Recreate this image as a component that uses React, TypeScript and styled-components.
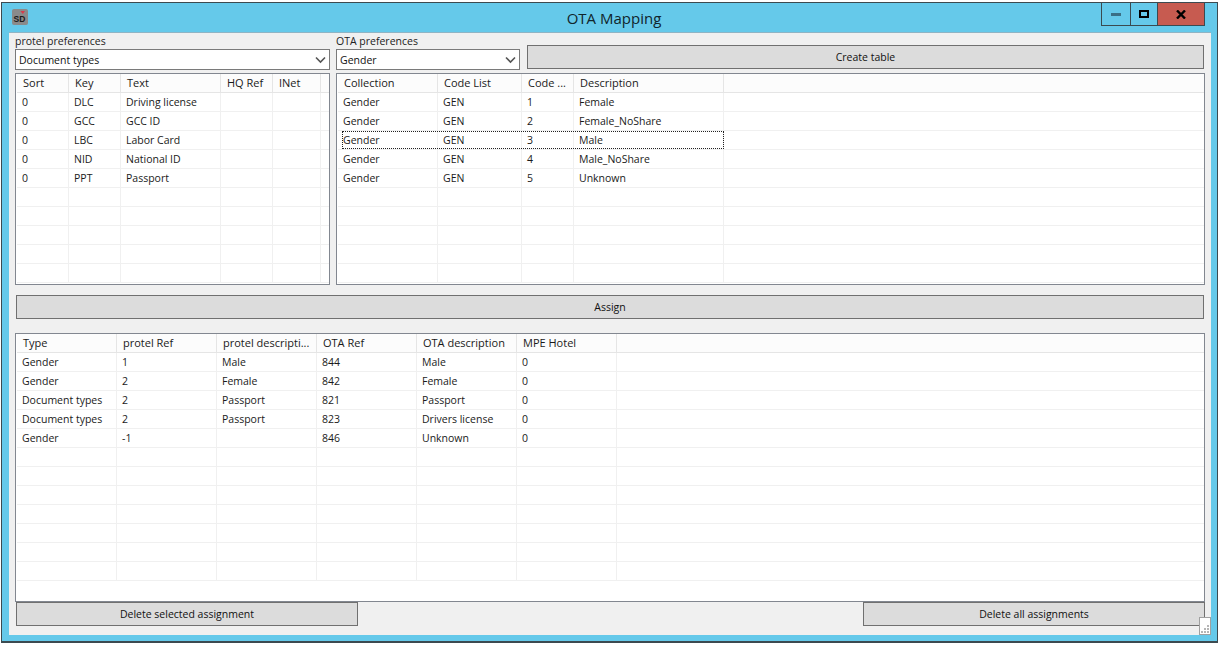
import React from "react";
import styled, { createGlobalStyle } from "styled-components";

const Global = createGlobalStyle`
  html, body { margin: 0; padding: 0; background: #fff; }
  body { font-family: "Open Sans", "Noto Sans", sans-serif; font-size: 11px; color: #111; }
`;

const Page = styled.div`
  width: 1223px;
  height: 645px;
  padding: 2px 0 0 1px;
  box-sizing: border-box;
  overflow: hidden;
`;
const Win = styled.div`
  width: 1217px;
  height: 641px;
  box-sizing: border-box;
  background: #65c9ea;
  border: 1px solid #3c4a50;
  border-bottom-width: 2px;
  padding: 0 6px 6px 7px;
  display: flex;
  flex-direction: column;
`;
const TitleBar = styled.div`
  height: 29px;
  flex: none;
  position: relative;
  display: flex;
  align-items: center;
  justify-content: center;
`;
const Title = styled.div`
  font-size: 15px;
  color: #10252c;
  margin-top: 1px;
  margin-left: 8px;
`;
const AppIcon = styled.svg`
  position: absolute;
  left: 3px;
  top: 6px;
`;
const Controls = styled.div`
  position: absolute;
  right: 6px;
  top: 0;
  height: 23px;
  display: flex;
  border: 1px solid #3a4a50;
  border-top: none;
  box-sizing: border-box;
`;
const Ctl = styled.div<{ $w: number; $red?: boolean }>`
  width: ${(p) => p.$w}px;
  display: flex;
  align-items: center;
  justify-content: center;
  background: ${(p) => (p.$red ? "#c75b50" : "transparent")};
  & + & { border-left: 1px solid #3a4a50; }
`;
const Panel = styled.div`
  flex: 1;
  min-height: 0;
  background: #f0f0f0;
  border-top: 1px solid #8fb4c4;
  padding: 0 6px 9px 6px;
  display: flex;
  flex-direction: column;
  position: relative;
`;
const TopRow = styled.div`
  display: flex;
  height: 40px;
  flex: none;
  gap: 6px;
`;
const Field = styled.div<{ $w: number }>`
  width: ${(p) => p.$w}px;
  flex: none;
  display: flex;
  flex-direction: column;
`;
const FieldLabel = styled.div`
  height: 15px;
  line-height: 15px;
  font-size: 10.5px;
  margin-top: 1px;
  padding-left: 0;
  color: #222;
`;
const Combo = styled.div`
  height: 21px;
  box-sizing: border-box;
  background: #fff;
  border: 1px solid #7a7a7a;
  display: flex;
  align-items: center;
  justify-content: space-between;
  padding: 0 3px 0 3px;
  font-size: 10.5px;
`;
const Btn = styled.div<{ $w?: number }>`
  height: 24px;
  box-sizing: border-box;
  background: #dcdcdc;
  border: 1px solid #707070;
  display: flex;
  align-items: center;
  justify-content: center;
  font-family: "Open Sans", sans-serif;
  font-size: 10.5px;
  color: #111;
  ${(p) => (p.$w ? `width: ${p.$w}px;` : "flex: 1;")}
`;
const CreateBtn = styled(Btn)`
  margin: 12px 1px 0 1px;
`;
const ListsRow = styled.div`
  display: flex;
  gap: 6px;
  height: 212px;
  flex: none;
  margin-top: 0;
`;
const ListFrame = styled.div<{ $w?: number; $h?: number }>`
  box-sizing: border-box;
  background: #fff;
  border: 1px solid #828790;
  overflow: hidden;
  padding-left: 1px;
  ${(p) => (p.$w ? `width: ${p.$w}px; flex: none;` : "flex: 1;")}
  ${(p) => (p.$h ? `height: ${p.$h}px;` : "")}
`;
const Row = styled.div<{ $h?: boolean }>`
  display: flex;
  height: 19px;
  box-sizing: border-box;
  border-bottom: 1px solid ${(p) => (p.$h ? "#e5e5e5" : "#f0f0f0")};
  position: relative;
`;
const Cell = styled.div<{ $w: number }>`
  width: ${(p) => p.$w}px;
  flex: none;
  box-sizing: border-box;
  border-right: 1px solid #f0f0f0;
  padding-left: 5px;
  line-height: 18px;
  font-size: 10.5px;
  white-space: nowrap;
  overflow: hidden;
  color: #1a1a1a;
`;
const HeadCell = styled(Cell)`
  background: #fcfcfc;
  border-right: 1px solid #e5e5e5;
  padding-left: 6px;
  font-size: 11px;
`;
const HeadFill = styled.div`
  flex: 1;
  background: #fcfcfc;
`;
const Focus = styled.div<{ $w: number }>`
  position: absolute;
  left: 4px;
  top: 0;
  width: ${(p) => p.$w}px;
  height: 18px;
  box-sizing: border-box;
  border: 1px dotted #222;
`;
const AssignWrap = styled.div`
  margin: 10px 1px 14px 1px;
  display: flex;
`;
const Footer = styled.div`
  margin-top: auto;
  display: flex;
  justify-content: space-between;
  padding: 0 0 0 1px;
`;
const Grip = styled.svg`
  position: absolute;
  right: 0;
  bottom: 0;
`;

type TableProps = { cols: number[]; head: string[]; rows: string[][]; total: number; focus?: number };
const Table = ({ cols, head, rows, total, focus }: TableProps) => {
  const width = cols.reduce((a, b) => a + b, 0);
  const list = Array.from({ length: total }, (_, i) => rows[i] ?? cols.map(() => ""));
  return (
    <>
      <Row $h>
        {head.map((h, i) => (
          <HeadCell key={i} $w={cols[i]}>{h}</HeadCell>
        ))}
        <HeadFill />
      </Row>
      {list.map((r, i) => (
        <Row key={i}>
          {r.map((c, j) => (
            <Cell key={j} $w={cols[j]}>{c}</Cell>
          ))}
          {focus === i && <Focus $w={width - 4} />}
        </Row>
      ))}
    </>
  );
};

const Chevron = () => (
  <svg width="11" height="8" viewBox="0 0 11 8" fill="none">
    <path d="M1 1.5 L5.5 6 L10 1.5" stroke="#555" strokeWidth="1.6" />
  </svg>
);

export default function App() {
  return (
    <Page>
      <Global />
      <Win>
        <TitleBar>
          <AppIcon width="16" height="16" viewBox="0 0 16 16">
            <rect x="0" y="0" width="16" height="16" rx="2" fill="#8a8a8a" />
            <text x="1.5" y="13" fontFamily="Liberation Sans" fontWeight="700" fontSize="8.5" fill="#1a1a1a">SD</text>
            <path d="M8.5 2 H13 L10.8 5 Z" fill="#d8394a" />
          </AppIcon>
          <Title>OTA Mapping</Title>
          <Controls>
            <Ctl $w={28}>
              <svg width="10" height="3"><rect width="10" height="3" fill="#3a6f86" /></svg>
            </Ctl>
            <Ctl $w={26}>
              <svg width="10" height="8"><rect x="1" y="1" width="8" height="6" fill="none" stroke="#000" strokeWidth="2" /></svg>
            </Ctl>
            <Ctl $w={46} $red>
              <svg width="10" height="9"><path d="M1 0.5 L9 8.5 M9 0.5 L1 8.5" stroke="#000" strokeWidth="2.4" /></svg>
            </Ctl>
          </Controls>
        </TitleBar>
        <Panel>
          <TopRow>
            <Field $w={315}>
              <FieldLabel>protel preferences</FieldLabel>
              <Combo>Document types<Chevron /></Combo>
            </Field>
            <Field $w={184}>
              <FieldLabel>OTA preferences</FieldLabel>
              <Combo>Gender<Chevron /></Combo>
            </Field>
            <CreateBtn>Create table</CreateBtn>
          </TopRow>
          <ListsRow>
            <ListFrame $w={315}>
              <Table
                cols={[52, 52, 100, 52, 48]}
                head={["Sort", "Key", "Text", "HQ Ref", "INet"]}
                rows={[
                  ["0", "DLC", "Driving license", "", ""],
                  ["0", "GCC", "GCC ID", "", ""],
                  ["0", "LBC", "Labor Card", "", ""],
                  ["0", "NID", "National ID", "", ""],
                  ["0", "PPT", "Passport", "", ""],
                ]}
                total={10}
              />
            </ListFrame>
            <ListFrame>
              <Table
                cols={[100, 84, 52, 150]}
                head={["Collection", "Code List", "Code ...", "Description"]}
                rows={[
                  ["Gender", "GEN", "1", "Female"],
                  ["Gender", "GEN", "2", "Female_NoShare"],
                  ["Gender", "GEN", "3", "Male"],
                  ["Gender", "GEN", "4", "Male_NoShare"],
                  ["Gender", "GEN", "5", "Unknown"],
                ]}
                total={10}
                focus={2}
              />
            </ListFrame>
          </ListsRow>
          <AssignWrap><Btn>Assign</Btn></AssignWrap>
          <ListFrame $h={253}>
            <Table
              cols={[100, 100, 100, 100, 100, 100]}
              head={["Type", "protel Ref", "protel descripti...", "OTA Ref", "OTA description", "MPE Hotel"]}
              rows={[
                ["Gender", "1", "Male", "844", "Male", "0"],
                ["Gender", "2", "Female", "842", "Female", "0"],
                ["Document types", "2", "Passport", "821", "Passport", "0"],
                ["Document types", "2", "Passport", "823", "Drivers license", "0"],
                ["Gender", "-1", "", "846", "Unknown", "0"],
              ]}
              total=
              {12}
            />
          </ListFrame>
          <Footer>
            <Btn $w={342}>Delete selected assignment</Btn>
            <Btn $w={342}>Delete all assignments</Btn>
          </Footer>
          <Grip width="12" height="18" viewBox="0 0 12 18">
            <rect x="0.5" y="0.5" width="11" height="17" fill="#fff" stroke="#a0a0a0" />
            {[[8, 8], [8, 11], [5, 11], [8, 14], [5, 14], [2, 14]].map(([x, y], i) => (
              <rect key={i} x={x} y={y} width="2" height="2" fill="#b5b5b5" />
            ))}
          </Grip>
        </Panel>
      </Win>
    </Page>
  );
}
